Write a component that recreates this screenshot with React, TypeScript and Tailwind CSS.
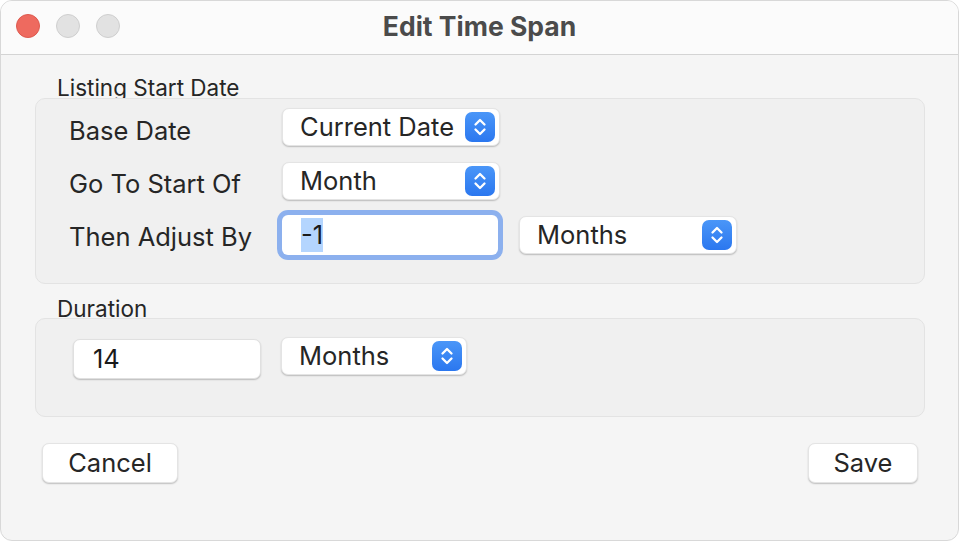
const Stepper = () => (
  <span className="flex h-[30px] w-[30px] items-center justify-center rounded-[7px] bg-gradient-to-b from-[#4a96f8] to-[#2b77ef]">
    <svg width="30" height="30" viewBox="0 0 30 30" fill="none">
      <path d="M10.5 12.5 L15 8 L19.5 12.5" stroke="white" strokeWidth="2.3" strokeLinecap="round" strokeLinejoin="round" />
      <path d="M10.5 17.5 L15 22 L19.5 17.5" stroke="white" strokeWidth="2.3" strokeLinecap="round" strokeLinejoin="round" />
    </svg>
  </span>
);

const Popup = ({ label, width }: { label: string; width: string }) => (
  <div
    className={`flex h-[38px] ${width} items-center justify-between rounded-[7px] border border-[#e4e4e4] bg-white pl-[17px] pr-[4px] text-[25.5px] text-[#262626] shadow-[0_1px_1.5px_rgba(0,0,0,0.22)]`}
  >
    <span className="leading-none">{label}</span>
    <Stepper />
  </div>
);

const Button = ({ label, width }: { label: string; width: string }) => (
  <button
    className={`flex h-[40px] ${width} items-center justify-center rounded-[7px] border border-[#e4e4e4] bg-white text-[25.5px] leading-none text-[#262626] shadow-[0_1px_1.5px_rgba(0,0,0,0.22)]`}
  >
    {label}
  </button>
);

const App = () => {
  return (
    <div className="h-[541px] w-[959px] bg-white font-['Inter','Liberation_Sans',sans-serif]">
      <div className="flex h-full w-full flex-col overflow-hidden rounded-[12px] border border-[#d8d8d8] bg-[#f5f5f5]">
        {/* title bar */}
        <div className="relative flex h-[54px] shrink-0 items-center justify-center border-b border-[#d4d4d4] bg-[#fbfbfb]">
          <div className="absolute left-[15px] top-[13px] flex gap-[16px]">
            <span className="h-[24px] w-[24px] rounded-full border border-[#de5a4f] bg-[#ee6a5f]" />
            <span className="h-[24px] w-[24px] rounded-full border border-[#cfcfcf] bg-[#e2e2e2]" />
            <span className="h-[24px] w-[24px] rounded-full border border-[#cfcfcf] bg-[#e2e2e2]" />
          </div>
          <h1 className="-mt-[3px] text-[26.5px] font-bold leading-none text-[#4b4b4b]">Edit Time Span</h1>
        </div>

        <div className="flex flex-col pl-[34px] pr-[33px] pt-[21px]">
          <div className="ml-[22px] h-[22px] pt-[1px] text-[22.5px] leading-none text-[#262626]">Listing Start Date</div>
          <div className="flex h-[186px] flex-col gap-[16px] rounded-[10px] border border-[#e3e3e3] bg-[#f0f0f0] pl-[33px] pt-[9px]">
            <div className="flex h-[38px] items-center">
              <span className="w-[213px] pt-[8px] text-[25.5px] leading-none text-[#262626]">Base Date</span>
              <Popup label="Current Date" width="w-[218px]" />
            </div>
            <div className="flex h-[38px] items-center">
              <span className="w-[213px] pt-[6px] text-[25.5px] leading-none text-[#262626]">Go To Start Of</span>
              <Popup label="Month" width="w-[218px]" />
            </div>
            <div className="flex h-[38px] items-center">
              <span className="w-[208px] pt-[3px] text-[25.5px] leading-none text-[#262626]">Then Adjust By</span>
              <div className="rounded-[11px] bg-[#8cb0ee] p-[5px]">
                <div className="flex h-[40px] w-[216px] items-center rounded-[6px] bg-white pl-[19px] text-[25.5px] leading-none text-[#1a1a1a]">
                  <span className="bg-[#b4d5fe] py-[4px]">-1</span>
                </div>
              </div>
              <div className="ml-[16px]">
                <Popup label="Months" width="w-[218px]" />
              </div>
            </div>
          </div>

          <div className="ml-[22px] mt-[14px] h-[20px] text-[22.5px] leading-none text-[#262626]">Duration</div>
          <div className="flex h-[99px] items-start rounded-[10px] border border-[#e3e3e3] bg-[#f0f0f0] pl-[37px] pt-[18px]">
            <div className="mt-[2px] flex h-[40px] w-[188px] items-center rounded-[7px] border border-[#e0e0e0] bg-white pl-[19px] text-[25.5px] leading-none text-[#1a1a1a] shadow-[0_1px_1.5px_rgba(0,0,0,0.22)]">
              14
            </div>
            <div className="ml-[20px]">
              <Popup label="Months" width="w-[186px]" />
            </div>
          </div>

          <div className="mt-[26px] flex justify-between px-[7px]">
            <Button label="Cancel" width="w-[136px]" />
            <Button label="Save" width="w-[110px]" />
          </div>
        </div>
      </div>
    </div>
  );
};

export default App;
